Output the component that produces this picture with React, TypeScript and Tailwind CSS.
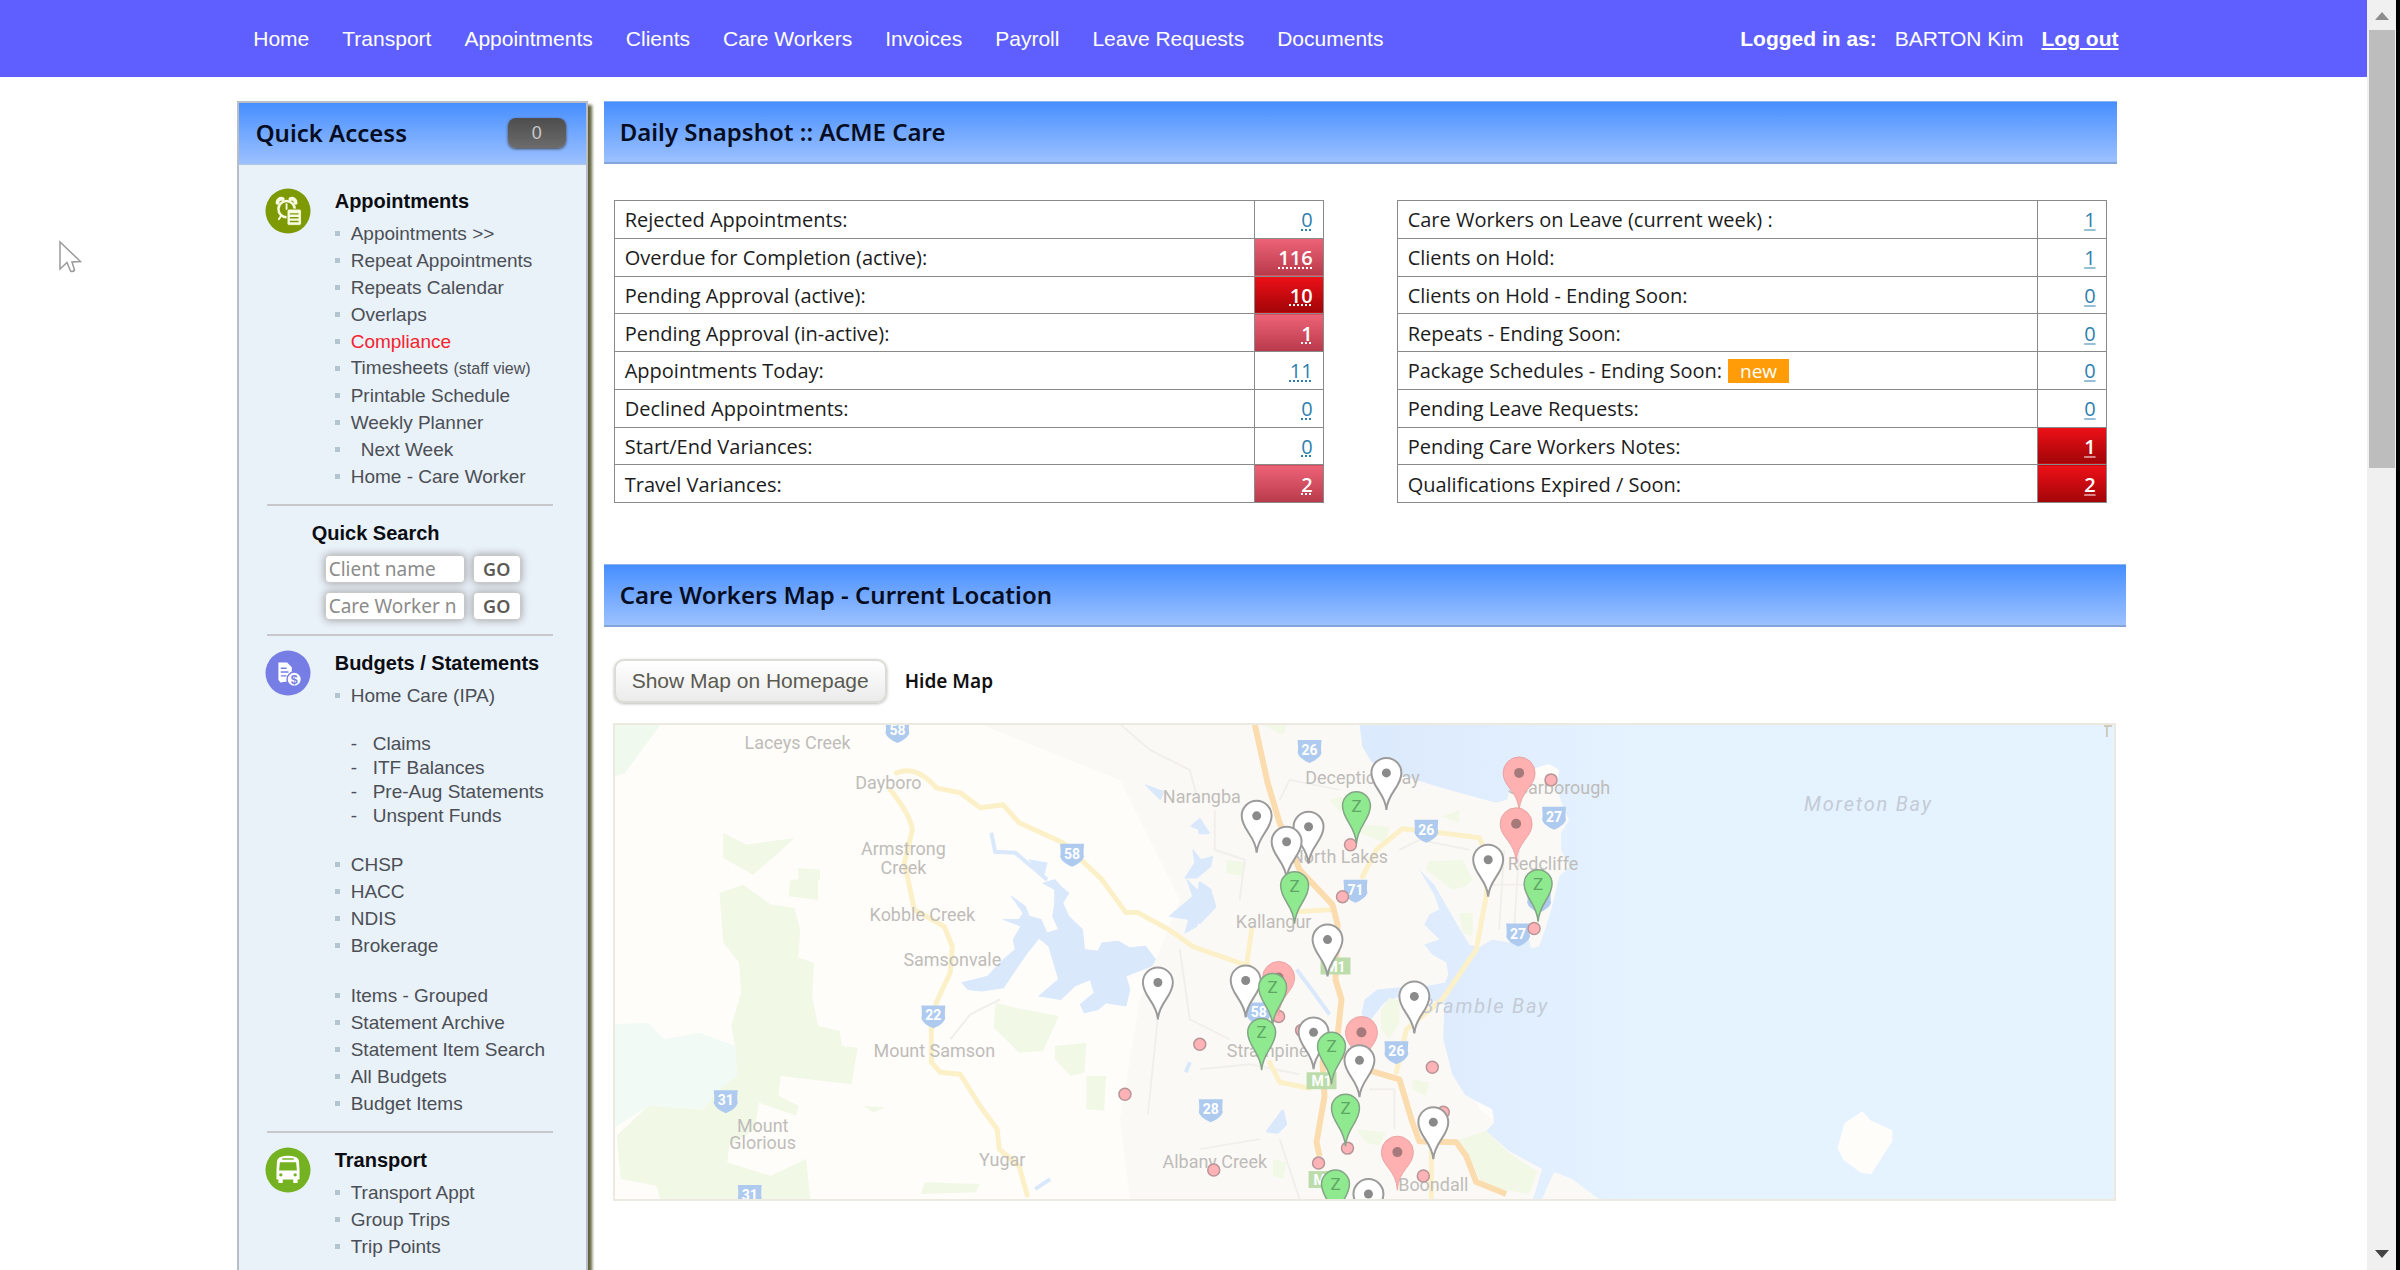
import type { ReactNode } from "react";

const NAV = [
  "Home",
  "Transport",
  "Appointments",
  "Clients",
  "Care Workers",
  "Invoices",
  "Payroll",
  "Leave Requests",
  "Documents",
];

type Tone = "plain" | "pink" | "red";
type SnapshotRow = { label: string; value: number; tone?: Tone; isNew?: boolean };

const SNAPSHOT_LEFT: SnapshotRow[] = [
  { label: "Rejected Appointments:", value: 0 },
  { label: "Overdue for Completion (active):", value: 116, tone: "pink" },
  { label: "Pending Approval (active):", value: 10, tone: "red" },
  { label: "Pending Approval (in-active):", value: 1, tone: "pink" },
  { label: "Appointments Today:", value: 11 },
  { label: "Declined Appointments:", value: 0 },
  { label: "Start/End Variances:", value: 0 },
  { label: "Travel Variances:", value: 2, tone: "pink" },
];

const SNAPSHOT_RIGHT: SnapshotRow[] = [
  { label: "Care Workers on Leave (current week) :", value: 1 },
  { label: "Clients on Hold:", value: 1 },
  { label: "Clients on Hold - Ending Soon:", value: 0 },
  { label: "Repeats - Ending Soon:", value: 0 },
  { label: "Package Schedules - Ending Soon:", value: 0, isNew: true },
  { label: "Pending Leave Requests:", value: 0 },
  { label: "Pending Care Workers Notes:", value: 1, tone: "red" },
  { label: "Qualifications Expired / Soon:", value: 2, tone: "red" },
];

const CELL_TONE: Record<Tone, string> = {
  plain: "text-[#2f7fae]",
  pink: "bg-linear-to-b from-[#ee6377] to-[#b83a4b] font-semibold text-white",
  red: "bg-linear-to-b from-[#ee1118] to-[#a20508] font-semibold text-white",
};

function Item({ children, className = "" }: { children: ReactNode; className?: string }) {
  return (
    <li className="flex h-[27px] items-center gap-[11px] whitespace-nowrap">
      <span className="size-[5px] shrink-0 bg-[#b3c6cf]" />
      <a href="#" className={className || "text-[#4b4f55]"}>
        {children}
      </a>
    </li>
  );
}

function Items({ names }: { names: string[] }) {
  return (
    <ul>
      {names.map((name) => (
        <Item key={name}>{name}</Item>
      ))}
    </ul>
  );
}

function Section({ icon, title, children }: { icon: ReactNode; title: string; children: ReactNode }) {
  return (
    <section className="flex items-start gap-6 pl-[26px]">
      {icon}
      <div>
        <h2 className="mb-[6px] text-xl leading-[26px] font-bold text-[#0b0d12]">{title}</h2>
        <div className="text-[19px] leading-6">{children}</div>
      </div>
    </section>
  );
}

function Divider() {
  return <hr className="my-[14px] mr-[33px] ml-7 border-t-2 border-[#c6c8cb]" />;
}

function AppointmentsIcon() {
  return (
    <svg viewBox="0 0 48 48" className="size-[46px] shrink-0" aria-hidden="true">
      <circle cx="24" cy="24" r="23.5" fill="#7d9a05" />
      <g fill="none" stroke="#f7fbe2" strokeLinecap="round">
        <circle cx="22.5" cy="22" r="8.5" strokeWidth="2.6" />
        <path d="M13 15.5a4 4 0 0 1 5.500-4M26.500 11.500a4 4 0 0 1 5.500 4" strokeWidth="4" />
        <path d="M22.500 17v5M16.500 29.500l-2 3" strokeWidth="2" />
      </g>
      <rect x="23" y="22" width="15" height="17" rx="2" fill="#f7fbe2" stroke="#7d9a05" />
      <path d="M26 27h9M26 31h9M26 35h9" stroke="#7d9a05" strokeWidth="1.5" />
    </svg>
  );
}

function BudgetsIcon() {
  return (
    <svg viewBox="0 0 48 48" className="size-[46px] shrink-0" aria-hidden="true">
      <circle cx="24" cy="24" r="23.5" fill="#767ee6" />
      <path d="M14 13h9l5 5v14l-12 2-2-3z" fill="#fff" />
      <path d="M16.500 19h6M16.500 23h8M16.500 27h6" stroke="#767ee6" strokeWidth="1.500" />
      <circle cx="30.500" cy="30.500" r="7.500" fill="#fff" stroke="#767ee6" strokeWidth="1.500" />
      <text x="30.500" y="35" textAnchor="middle" fontSize="13" fontWeight="bold" fill="#767ee6">
        $
      </text>
    </svg>
  );
}

function TransportIcon() {
  return (
    <svg viewBox="0 0 48 48" className="size-[46px] shrink-0" aria-hidden="true">
      <circle cx="24" cy="24" r="23.5" fill="#74b222" />
      <path
        d="M16 10.500q8-3 16 0 3 1 3.500 5l.5 9v9.500h-2v3.500h-4.500V34h-11v3.500H14V34h-2v-9.500l.5-9q.5-4 3.500-5z"
        fill="#fff"
      />
      <path d="M18 12.500h12" stroke="#74b222" strokeWidth="1.500" />
      <path d="M15.500 16h17l.8 8.500H14.700z" fill="#74b222" />
      <circle cx="16.500" cy="29" r="1.700" fill="#74b222" />
      <circle cx="31.500" cy="29" r="1.700" fill="#74b222" />
    </svg>
  );
}

function SearchRow({ label }: { label: string }) {
  return (
    <form className="flex gap-2" onSubmit={(e) => e.preventDefault()}>
      <input
        type="text"
        aria-label={label}
        placeholder={label}
        className="h-7 w-[140px] rounded-sm border border-[#c9c9c9] bg-white pr-2 pl-[3px] font-['Noto_Sans'] text-[19px] text-[#555] shadow-[0_0_8px_#9a9a9a] placeholder:text-[#8b8b8b]"
      />
      <button
        type="submit"
        className="h-7 w-12 rounded-sm border border-[#c9c9c9] bg-white font-['Noto_Sans'] text-lg leading-6 font-semibold text-[#5c5a55] shadow-[0_0_8px_#9a9a9a]"
      >
        GO
      </button>
    </form>
  );
}

function Sidebar() {
  return (
    <aside className="w-[351px] shrink-0 border-2 border-[#b9bdc6] bg-[#e9f1f9] shadow-[4px_4px_3px_#62633f]">
      <header className="flex h-[62px] items-center justify-between border-b border-[#b3c4e4] bg-linear-to-b from-[#468eff] to-[#9cc1ff] pr-5 pb-[2px] pl-[17px]">
        <h1 className="font-['Noto_Sans'] text-2xl font-semibold text-[#060d22]">Quick Access</h1>
        <span className="flex h-[30px] w-[58px] items-center justify-center rounded-lg bg-linear-to-b from-[#4d4d4d] to-[#6c6c6c] text-lg text-[#c9c9c9] shadow-[0_1px_3px_#444]">
          0
        </span>
      </header>

      <div className="pt-[23px] pb-8">
        <Section icon={<AppointmentsIcon />} title="Appointments">
          <ul>
            <Item>Appointments &gt;&gt;</Item>
            <Item>Repeat Appointments</Item>
            <Item>Repeats Calendar</Item>
            <Item>Overlaps</Item>
            <Item className="text-[#f5232f]">Compliance</Item>
            <Item>
              Timesheets <span className="text-base">(staff view)</span>
            </Item>
            <Item>Printable Schedule</Item>
            <Item>Weekly Planner</Item>
            <Item className="pl-[10px] text-[#4b4f55]">Next Week</Item>
            <Item>Home - Care Worker</Item>
          </ul>
        </Section>
        <Divider />
        <section className="pl-[73px]">
          <h2 className="text-xl leading-[26px] font-bold text-[#0b0d12]">Quick Search</h2>
          <div className="mt-[9px] flex flex-col gap-[9px] pl-[13px]">
            <SearchRow label="Client name" />
            <SearchRow label="Care Worker name" />
          </div>
        </section>
        <Divider />
        <Section icon={<BudgetsIcon />} title="Budgets / Statements">
          <div className="flex flex-col gap-[23px]">
            <Items names={["Home Care (IPA)"]} />
            <ul className="pl-4 text-[#4b4f55]">
              {["Claims", "ITF Balances", "Pre-Aug Statements", "Unspent Funds"].map((name) => (
                <li key={name} className="flex whitespace-nowrap">
                  <span className="w-[22px]">-</span>
                  <a href="#">{name}</a>
                </li>
              ))}
            </ul>
            <Items names={["CHSP", "HACC", "NDIS", "Brokerage"]} />
            <Items
              names={["Items - Grouped", "Statement Archive", "Statement Item Search", "All Budgets", "Budget Items"]}
            />
          </div>
        </Section>
        <Divider />
        <Section icon={<TransportIcon />} title="Transport">
          <Items names={["Transport Appt", "Group Trips", "Trip Points"]} />
        </Section>
      </div>
    </aside>
  );
}

function PanelTitle({ children }: { children: ReactNode }) {
  return (
    <h2 className="h-[63px] border-t border-b-2 border-t-[#8db4ee] border-b-[#84a5d9] bg-linear-to-b from-[#468eff] to-[#9cc1ff] pl-4 font-['Noto_Sans'] text-2xl leading-[60px] font-semibold text-[#060d22]">
      {children}
    </h2>
  );
}

function SnapshotTable({ rows, dotted = false }: { rows: SnapshotRow[]; dotted?: boolean }) {
  return (
    <table className="h-[303px] w-full border-collapse font-['Open_Sans'] text-xl leading-6 text-[#1c1c1c]">
      <tbody>
        {rows.map((row) => (
          <tr key={row.label}>
            <th scope="row" className="border border-[#8a8a8a] pt-[2px] pl-[10px] text-left font-normal">
              {row.label}
              {row.isNew && (
                <span className="ml-[6px] inline-block bg-[#ff9c07] px-3 text-[19px] leading-6 text-white">new</span>
              )}
            </th>
            <td
              className={`w-[69px] border border-[#8a8a8a] pt-[2px] pr-[10px] text-right ${CELL_TONE[row.tone ?? "plain"]}`}
            >
              <a
                href="#"
                className={`underline decoration-2 underline-offset-2 ${dotted ? "decoration-dotted" : "decoration-current/50"}`}
              >
                {row.value}
              </a>
            </td>
          </tr>
        ))}
      </tbody>
    </table>
  );
}

type Point = [number, number];

const WHITE_PINS: Point[] = [
  [1257, 816], [1309, 827], [1287, 842], [1387, 773], [1489, 860], [1328, 940], [1246, 981],
  [1314, 1033], [1415, 997], [1434, 1123], [1369, 1195], [1158, 983],
];
const GREEN_PINS: Point[] = [
  [1357, 806], [1295, 886], [1539, 884], [1273, 988], [1262, 1033], [1332, 1047], [1346, 1109], [1336, 1185],
];
const RED_PINS: Point[] = [[1520, 773], [1517, 824], [1279, 978], [1362, 1033], [1398, 1153]];
const DOTS: Point[] = [
  [1351, 845], [1552, 780], [1343, 897], [1535, 929], [1279, 1017], [1200, 1045], [1433, 1068],
  [1348, 1149], [1319, 1164], [1214, 1171], [1424, 1177], [1125, 1095], [1302, 1031], [1444, 1113],
];
const SHIELDS: [number, number, string][] = [
  [897, 730, "58"], [1072, 854, "58"], [933, 1016, "22"], [725, 1101, "31"], [749, 1196, "31"],
  [1211, 1110, "28"], [1310, 750, "26"], [1427, 830, "26"], [1555, 817, "27"], [1356, 890, "71"],
  [1540, 900, "27"], [1519, 934, "27"], [1259, 1013, "58"], [1397, 1052, "26"],
];
const PLACES: [number, number, string][] = [
  [797, 743, "Laceys Creek"], [888, 783, "Dayboro"], [903, 849, "Armstrong"], [903, 868, "Creek"],
  [1202, 797, "Narangba"], [922, 915, "Kobble Creek"], [952, 961, "Samsonvale"], [934, 1052, "Mount Samson"],
  [762, 1127, "Mount"], [762, 1144, "Glorious"], [1002, 1161, "Yugar"], [1215, 1163, "Albany Creek"],
  [1268, 1052, "Strathpine"], [1274, 922, "Kallangur"], [1340, 857, "North Lakes"], [1363, 778, "Deception Bay"],
  [1560, 788, "Scarborough"], [1544, 864, "Redcliffe"], [1434, 1186, "Boondall"],
];

function CareMap() {
  return (
    <svg
      viewBox="614 725 1502 475"
      role="img"
      aria-label="Care workers map"
      className="block w-full border-2 border-[#eceae0] bg-[#fefdf9]"
    >
      <defs>
        <linearGradient id="sea" gradientUnits="userSpaceOnUse" x1="1380" y1="0" x2="1640" y2="0">
          <stop offset="0" stopColor="#dceafd" />
          <stop offset="1" stopColor="#e5f2ff" />
        </linearGradient>
      </defs>

      {/* Suburban area */}
      <path
        d="M980 724H1400L1600 800 1560 950 1450 1000 1480 1110 1600 1200H1130L1120 1120 1140 1000 1180 900 1120 780z"
        fill="#fbf9f6"
      />

      {/* Parks and forest */}
      <g fill="#f1f8e6">
        <g transform="translate(600 880) scale(.3954 .3333)">
          <path d="M300 40L360 15 430 75 490 85 505 150 500 235 540 250 535 350 550 440 605 455 610 500 650 505 635 615 455 590 450 650 500 680 495 710 400 670 390 750 325 800 320 850 430 890 520 840 530 960H150L140 920 50 900 40 770 120 680 260 690 310 610 345 590 340 500 330 440 355 340 350 250 310 190z" />
          <path d="M480 0H550V60L475 50zM1000 370L1050 385 1160 410 1120 515 1060 520 995 445zM1150 500L1230 490 1225 580 1190 590 1150 540zM1230 590H1280L1275 695 1230 690zM820 910L960 915 950 940 810 945zM665 680L720 685 690 700z" />
          <path d="M35 435L120 430 160 480 250 460 340 500 345 590 290 640 260 690 120 680 35 745z" fill="#f1faf4" />
        </g>
        <g transform="translate(600 550) scale(.3954 .3333)">
          <path d="M310 850L370 885 490 865 440 920 385 975 310 925zM500 955L555 960V990H500z" />
          <path d="M30 520L150 525 60 670 30 680z" fill="#eff9ee" />
        </g>
        <g transform="translate(1200 710) scale(.3333)">
          <path d="M690 455L790 450 820 510 800 530 760 540 680 480zM780 610H820V680L790 670zM730 320L780 300V340zM490 345L570 350 560 400 480 370zM180 40H265L250 75zM80 450L140 460 130 500 80 490zM390 270L430 260 425 310z" />
        </g>
        <g transform="translate(1200 950) scale(.3333)">
          <path d="M640 390L690 400 680 440 640 420zM470 540L560 550 540 590 500 580zM220 630L260 640 250 690 220 680z" />
        </g>
      </g>

      {/* Bay, lakes and rivers */}
      <path
        d="M1360 724L1363 747 1372 762 1400 775 1433 785 1460 793 1497 803 1508 800 1512 785 1530 770 1550 764 1560 770 1558 790 1565 810 1570 820 1562 833V850L1570 867 1560 877 1553 907 1547 927 1540 947 1532 949 1530 940 1510 943 1493 940 1480 948 1470 945 1455 920 1435 885 1420 870 1435 895 1440 910 1430 915 1425 925 1440 940 1425 945 1433 955 1447 963 1449 975 1446 983 1430 986 1400 988 1378 990 1365 1000 1362 1015 1370 1022 1385 1003 1400 997 1430 1000 1445 1005 1444 1040 1453 1075 1466 1096 1493 1110 1495 1123 1487 1132 1510 1152 1543 1170 1534 1200H1543L1555 1173 1573 1180 1600 1200H2116V724z"
        fill="url(#sea)"
      />
      <g transform="translate(1200 950) scale(.3333)" fill="#f1f8e6">
        <path d="M545 180L570 145 600 155 600 220 570 270 545 240zM770 575L860 545 930 612 1015 668 990 735 850 710 800 600z" />
      </g>
      <path d="M1864 1112L1872 1121 1894 1131V1142L1873 1175 1863 1174 1845 1161 1839 1149 1846 1124z" fill="#fefdf9" />
      <g fill="#dae8fc" stroke="#dae8fc" strokeWidth="3" strokeLinejoin="round">
        <path
          transform="translate(600 880) scale(.3954 .3333)"
          d="M915 310L930 330 965 335 1020 325 1045 280 1080 220 1110 175 1135 200 1150 260 1160 300 1110 350 1165 360 1200 320 1240 300 1250 340 1215 375 1225 400 1260 390 1280 370 1330 380 1340 330 1330 290 1395 260 1405 240 1380 200 1340 205 1310 185 1270 190 1260 215 1225 210 1220 150 1185 110 1170 70 1185 40 1165 20 1150 0 1120 10 1150 30V70L1145 110 1160 150 1130 160 1115 120 1085 110 1075 80 1040 50 1070 100 1060 120 1020 120 1065 140 1045 180 1050 210 1020 240 980 290zM1485 0L1500 50 1440 110 1490 120 1480 160 1510 140 1520 100 1550 60 1545 30 1510 30z"
        />
        <path
          transform="translate(600 550) scale(.3954 .3333)"
          d="M1500 900L1520 930 1550 920 1545 950 1510 985 1480 985 1505 940zM1495 830L1515 808 1542 850zM1380 705L1425 725 1418 750zM1085 930L1130 940 1120 985z"
        />
        <path d="M1200 820L1208 833H1200zM1200 883L1210 890 1215 907 1200 923zM1283 1112L1286 1125 1278 1133 1268 1132z" />
      </g>
      <path
        d="M991 833L995 852 1015 853 1033 868 1047 880M1297 970L1312 990 1330 1015M1186 1073L1190 1063M1035 1190L1050 1180"
        fill="none"
        stroke="#dae8fc"
        strokeWidth="4"
      />

      {/* Minor roads */}
      <path
        d="M1120 724L1150 750 1190 770 1198 800M1215 810V850L1245 860 1240 900M1158 1018L1148 1115M1200 1070L1250 1065 1300 1075M1180 950L1190 1020 1230 1040M1340 790L1290 780 1280 800M1400 850L1420 840 1470 850M1505 850L1500 930M1520 850L1515 930M1490 885H1540M1370 1090H1395V1130M1280 1140L1300 1200M1200 1150L1260 1140M950 1040L970 1015 1000 1000"
        fill="none"
        stroke="#f1efec"
        strokeWidth="2"
      />

      {/* Main roads and motorways */}
      <g fill="none" stroke="#fcf0c8" strokeWidth="5" strokeLinejoin="round" strokeLinecap="round">
        <path d="M896 773Q916 765 936 788L960 793 980 808 1003 805 1019 823 1063 843 1102 880 1126 913 1138 913 1169 930 1193 947 1222 957 1250 967" />
        <path d="M890 790Q910 815 912 830L904 863 914 910 944 927 952 947 950 973 936 1003 931 1030V1063L940 1073 960 1075 980 1107 997 1130 999 1150 1019 1167 1027 1196" />
        <path d="M1363 877L1377 850 1403 829 1433 832 1480 838 1490 860 1487 897 1477 950 1443 1000 1407 1030 1397 1073M1252 930L1247 965M1270 1063L1280 1083 1310 1089M1300 912L1333 910M1432 1147V1198" />
      </g>
      <g fill="none" stroke="#fbdcae" strokeWidth="6" strokeLinejoin="round">
        <path d="M1255 724L1268 783 1280 823 1300 870 1333 905 1338 925 1336 980 1342 1000 1338 1037 1323 1063 1325 1097 1317 1143 1320 1157" />
        <path d="M1332 1050L1373 1072 1400 1080 1413 1123 1420 1142 1457 1143 1467 1157 1477 1183 1507 1195" />
      </g>

      {/* Place names */}
      <g className="font-['Roboto']" fill="#bebcb9" fontSize="18" textAnchor="middle">
        {PLACES.map(([x, y, name]) => (
          <text key={name + y} x={x} y={y + 6}>
            {name}
          </text>
        ))}
        <g fontStyle="italic" fill="#c3cbd6" className="tracking-widest">
          <text x="1870" y="811" fontSize="20">
            Moreton Bay
          </text>
          <text x="1486" y="1014" fontSize="20">
            Bramble Bay
          </text>
        </g>
      </g>

      {/* Route markers */}
      <g className="font-['Roboto']" fontSize="14" fontWeight="bold" textAnchor="middle">
        {SHIELDS.map(([x, y, label]) => (
          <g key={`${x}-${y}`} transform={`translate(${x} ${y})`}>
            <path d="M-12-10H12Q11 0 12 3 10 9 0 13-10 9-12 3-11 0-12-10z" fill="#aecbef" />
            <text y="5" fill="#fff">
              {label}
            </text>
          </g>
        ))}
        {[[1336, 966], [1322, 1081], [1324, 1180]].map(([x, y]) => (
          <g key={y} transform={`translate(${x} ${y})`}>
            <rect x="-15" y="-8" width="30" height="17" fill="#bcdcab" />
            <text y="6" fill="#fff">
              M1
            </text>
          </g>
        ))}
      </g>

      {/* Worker and client markers */}
      {DOTS.map(([x, y]) => (
        <circle key={`${x}-${y}`} cx={x} cy={y} r="6" fill="#ffb3b7" stroke="#b79597" strokeWidth="1.500" />
      ))}
      {RED_PINS.map(([x, y]) => (
        <g key={`${x}-${y}`} transform={`translate(${x} ${y})`}>
          <path d="M0 38C-1 18-16 14-16 0A16 16 0 0 1 16 0C16 14 1 18 0 38z" fill="#ffb1b1" stroke="#e8a3a3" />
          <circle r="5" fill="#a67a7a" />
        </g>
      ))}
      {WHITE_PINS.map(([x, y]) => (
        <g key={`${x}-${y}`} transform={`translate(${x} ${y})`}>
          <path d="M0 37C-1 20-15 14-15 0A15 15 0 0 1 15 0C15 14 1 20 0 37z" fill="#fff" stroke="#9b9b9b" strokeWidth="2" />
          <circle r="4.500" fill="#8a8a8a" />
        </g>
      ))}
      {GREEN_PINS.map(([x, y]) => (
        <g key={`${x}-${y}`} transform={`translate(${x} ${y})`}>
          <path d="M0 38C-1 20-14 14-14 0A14 14 0 0 1 14 0C14 14 1 20 0 38z" fill="#8ee98f" stroke="#84a486" strokeWidth="1.500" />
          <text y="6" textAnchor="middle" fontSize="17" fill="#5fa563" className="font-['Roboto']">
            Z
          </text>
        </g>
      ))}
      <g transform="translate(1360 1061)">
        <path d="M0 37C-1 20-15 14-15 0A15 15 0 0 1 15 0C15 14 1 20 0 37z" fill="#fff" stroke="#9b9b9b" strokeWidth="2" />
        <circle r="4.500" fill="#8a8a8a" />
      </g>
      <path d="M2106 726H2114M2109 726V737" stroke="#cfc9bd" strokeWidth="2" />
    </svg>
  );
}

function Scrollbar() {
  return (
    <div className="flex w-[33px] shrink-0 flex-col items-center justify-between border-r-4 border-black bg-[#f0f0f0]">
      <div className="flex flex-col items-center">
        <svg viewBox="0 0 14 8" className="mt-3 mb-[10px] h-2 w-[14px]" aria-hidden="true">
          <path d="M0 8L7 0l7 8z" fill="#8d8d8d" />
        </svg>
        <div className="h-[438px] w-[26px] bg-[#bdbdbd]" />
      </div>
      <svg viewBox="0 0 14 8" className="mb-3 h-2 w-[14px]" aria-hidden="true">
        <path d="M0 0L7 8l7-8z" fill="#444" />
      </svg>
    </div>
  );
}

export default function App() {
  return (
    <div className="relative flex h-screen overflow-hidden bg-white font-['Liberation_Sans',sans-serif]">
      <div className="flex min-w-0 flex-1 flex-col">
        <header className="flex h-[77px] shrink-0 items-center justify-between bg-[#5f5fff] pr-[10.5%] pl-[10.7%] text-[21px] text-white">
          <nav className="flex gap-[33px] whitespace-nowrap">
            {NAV.map((name) => (
              <a key={name} href="#">
                {name}
              </a>
            ))}
          </nav>
          <div className="flex gap-[18px] whitespace-nowrap">
            <strong>Logged in as:</strong>
            <span>BARTON Kim</span>
            <a href="#" className="font-bold underline decoration-2 underline-offset-2">
              Log out
            </a>
          </div>
        </header>

        <div className="mt-6 flex min-h-0 flex-1 items-start gap-4 pr-[10.2%] pl-[10%]">
          <Sidebar />
          <main className="min-w-0 flex-1">
            <div className="pr-[9px]">
              <PanelTitle>Daily Snapshot :: ACME Care</PanelTitle>
              <div className="mt-9 grid grid-cols-2 gap-[73px] px-[10px]">
                <SnapshotTable rows={SNAPSHOT_LEFT} dotted />
                <SnapshotTable rows={SNAPSHOT_RIGHT} />
              </div>
            </div>
            <div className="mt-[61px]">
              <PanelTitle>Care Workers Map - Current Location</PanelTitle>
            </div>
            <div className="mt-8 flex items-center gap-[18px] pl-[10px]">
              <button
                type="button"
                className="h-11 rounded-[10px] border-2 border-[#dcdcd4] bg-linear-to-b from-white to-[#ebebeb] px-4 text-[21px] text-[#5a5a50] shadow-[0_1px_3px_#bbb]"
              >
                Show Map on Homepage
              </button>
              <a href="#" className="font-['Noto_Sans'] text-[19px] font-semibold text-[#111]">
                Hide Map
              </a>
            </div>
            <div className="mt-5 pr-[10px] pl-[9px]">
              <CareMap />
            </div>
          </main>
        </div>
      </div>
      <Scrollbar />

      <svg viewBox="0 0 24 34" className="absolute top-[240px] left-[58px] h-[34px] w-6" aria-hidden="true">
        <path d="M2 2V29L9 22.500 12.500 31Q15 32.500 16.500 30L14 22 22.500 21.500z" fill="#fff" stroke="#9a9a9a" strokeWidth="1.500" />
      </svg>
    </div>
  );
}
